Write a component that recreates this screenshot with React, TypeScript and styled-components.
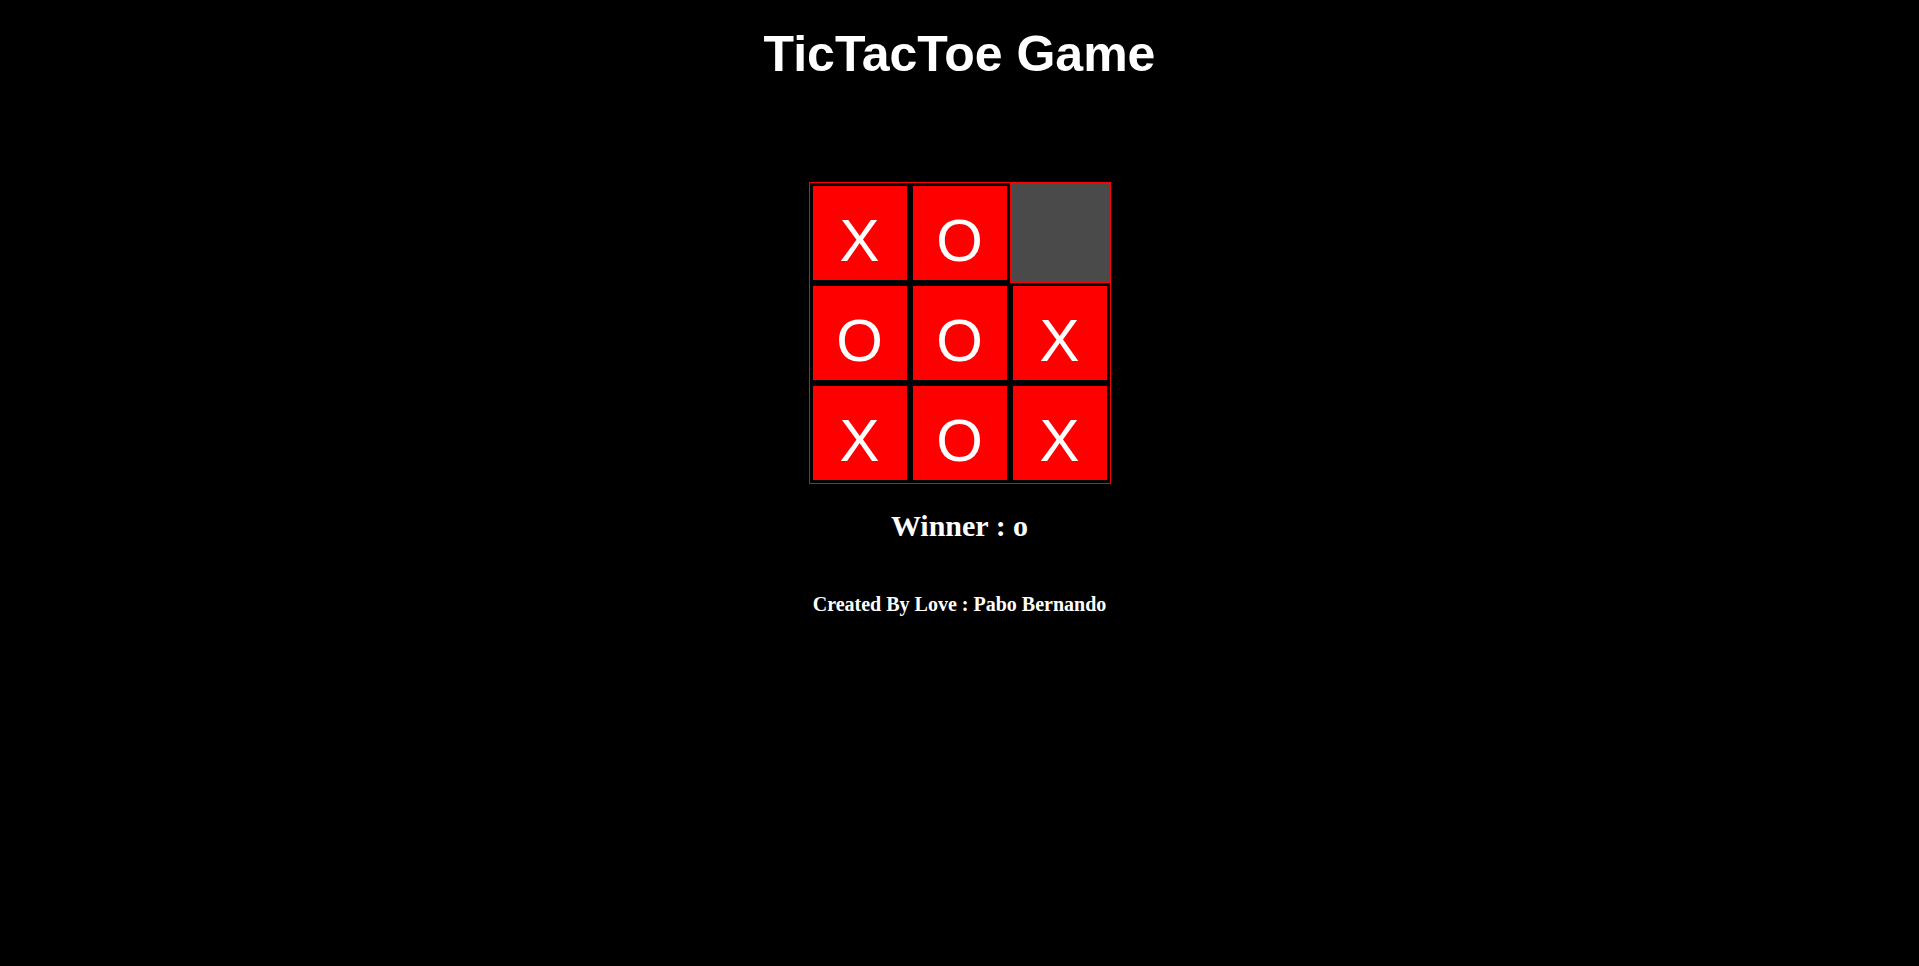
import React from "react";
import styled, { createGlobalStyle } from "styled-components";

const GlobalStyle = createGlobalStyle`
  html, body {
    margin: 0;
    padding: 0;
    background: #000;
  }
  body {
    min-height: 966px;
    font-family: "Liberation Serif", "Times New Roman", serif;
    color: #fff;
  }
`;

const Page = styled.main`
  display: flex;
  flex-direction: column;
  align-items: center;
  min-height: 966px;
  background: #000;
`;

const Title = styled.h1`
  margin: 26px 0 0;
  font-family: "Liberation Sans", Arial, sans-serif;
  font-size: 50px;
  line-height: 57px;
  font-weight: 700;
  color: #fff;
`;

const Board = styled.div`
  margin-top: 99px;
  display: grid;
  grid-template-columns: repeat(3, 100px);
  grid-template-rows: repeat(3, 100px);
  border: 1px solid #ff0000;
`;

const Cell = styled.div<{ $empty?: boolean }>`
  box-sizing: border-box;
  width: 100px;
  height: 100px;
  display: flex;
  align-items: center;
  justify-content: center;
  padding-top: 16px;
  background: ${(p) => (p.$empty ? "#4a4a4a" : "#ff0000")};
  border: ${(p) => (p.$empty ? "1px solid #ff0000" : "3px solid #000")};
  font-family: "Liberation Sans", Arial, sans-serif;
  font-size: 60px;
  line-height: 1;
  color: #fff;
  cursor: pointer;
`;

const Winner = styled.h2`
  margin: 25px 0 0;
  font-size: 30px;
  line-height: 33px;
  font-weight: 700;
  color: #fff;
`;

const Credit = styled.h4`
  margin: 51px 0 0;
  font-size: 20px;
  line-height: 23px;
  font-weight: 700;
  color: #fff;
`;

const cells = ["X", "O", "", "O", "O", "X", "X", "O", "X"];

export default function App() {
  return (
    <>
      <GlobalStyle />
      <Page>
        <Title>TicTacToe Game</Title>
        <Board>
          {cells.map((v, i) => (
            <Cell key={i} $empty={v === ""}>
              {v}
            </Cell>
          ))}
        </Board>
        <Winner>Winner : o</Winner>
        <Credit>Created By Love : Pabo Bernando</Credit>
      </Page>
    </>
  );
}
